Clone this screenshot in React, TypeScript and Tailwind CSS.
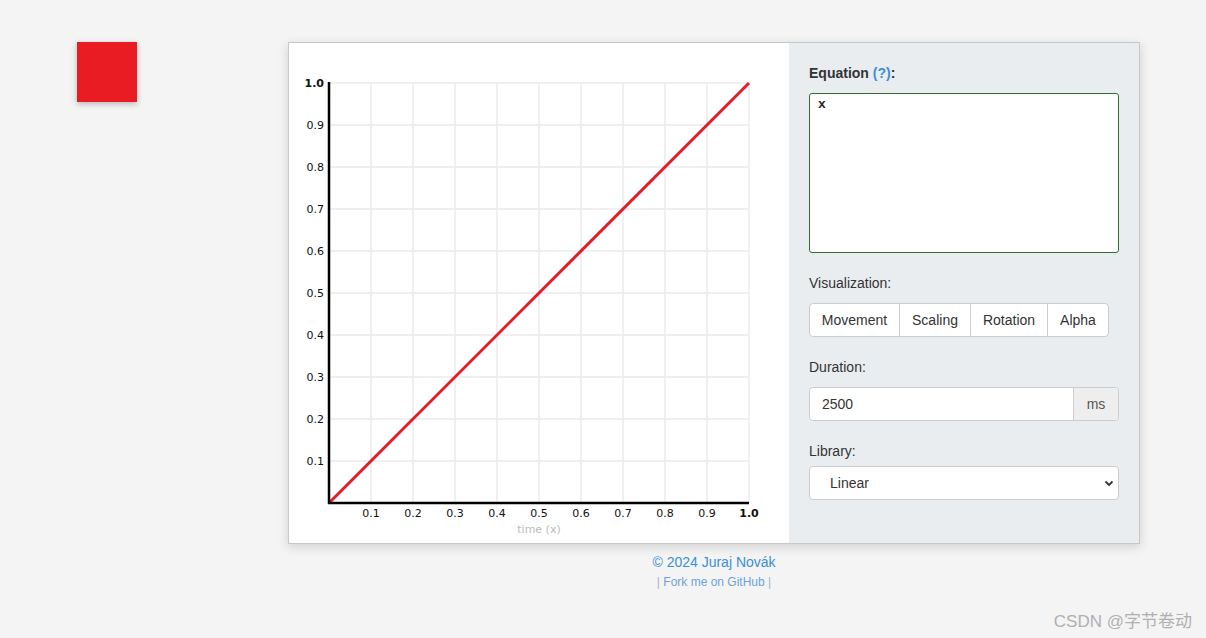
import React from "react";

function Chart() {
  const ticks = [1, 2, 3, 4, 5, 6, 7, 8, 9, 10];
  const O = 40;
  const S = 42;
  return (
    <svg width="500" height="500" viewBox="0 0 500 500" style={{ fontFamily: "'DejaVu Sans', Verdana, sans-serif" }}>
      {ticks.map((t) => (
        <g key={t}>
          <line x1={O + t * S} y1={O} x2={O + t * S} y2={O + 420} stroke="#ebebeb" strokeWidth="1.5" />
          <line x1={O} y1={O + 420 - t * S} x2={O + 420} y2={O + 420 - t * S} stroke="#ebebeb" strokeWidth="1.5" />
        </g>
      ))}
      <line x1={O} y1={O + 420} x2={O + 420} y2={O} stroke="#e51c24" strokeWidth="3" />
      <line x1={O} y1={O - 1} x2={O} y2={O + 421} stroke="#000" strokeWidth="2.5" />
      <line x1={O - 1} y1={O + 420} x2={O + 420} y2={O + 420} stroke="#000" strokeWidth="2.5" />
      {ticks.map((t) => (
        <text
          key={"y" + t}
          x={O - 5}
          y={O + 420 - t * S + 4}
          textAnchor="end"
          fontSize="11"
          fontWeight={t === 10 ? "bold" : "normal"}
          fill="#111"
        >
          {(t / 10).toFixed(1)}
        </text>
      ))}
      {ticks.map((t) => (
        <text
          key={"x" + t}
          x={O + t * S}
          y={O + 420 + 14}
          textAnchor="middle"
          fontSize="11"
          fontWeight={t === 10 ? "bold" : "normal"}
          fill="#111"
        >
          {(t / 10).toFixed(1)}
        </text>
      ))}
      <text x={O + 210} y={O + 420 + 30} textAnchor="middle" fontSize="11" fill="#bbb">
        time (x)
      </text>
    </svg>
  );
}

export default function App() {
  return (
    <div
      className="relative w-[1206px] h-[638px] bg-[#f4f4f4] overflow-hidden text-[#333]"
      style={{ fontFamily: "'Liberation Sans', Arial, sans-serif" }}
    >
      <div className="flex pt-[42px]">
        <div className="ml-[77px] w-[60px] h-[60px] bg-[#e91c24] shadow-[0_2px_6px_rgba(0,0,0,0.25)]" />
        <div className="ml-[151px] flex flex-col items-center">
          <div className="flex w-[852px] h-[502px] border border-[#c8c8c8] bg-white shadow-[0_3px_10px_rgba(0,0,0,0.15)]">
            <div className="w-[500px] h-[500px] bg-white">
              <Chart />
            </div>
            <div className="w-[350px] h-[500px] bg-[#eaedf0] px-[20px] pt-[22px]">
              <div className="text-[14px] font-bold leading-[16px]">
                Equation <span className="text-[#3a8fd6]">(?)</span>:
              </div>
              <textarea
                className="mt-[12px] block w-[310px] h-[160px] bg-white border border-[#2f6f2f] rounded-[3px] px-[8px] py-[2px] text-[13px] leading-[18px] font-bold text-[#222] resize-none outline-none"
                style={{ fontFamily: "'Liberation Mono', 'Courier New', monospace" }}
                defaultValue="x"
              />
              <div className="mt-[22px] text-[14px] leading-[16px]">Visualization:</div>
              <div className="mt-[12px] flex w-[300px] h-[34px] border border-[#cccccc] rounded-[4px] bg-white text-[14px] overflow-hidden">
                <div className="w-[90px] flex items-center justify-center border-r border-[#cccccc]">Movement</div>
                <div className="w-[71px] flex items-center justify-center border-r border-[#cccccc]">Scaling</div>
                <div className="w-[77px] flex items-center justify-center border-r border-[#cccccc]">Rotation</div>
                <div className="flex-1 flex items-center justify-center">Alpha</div>
              </div>
              <div className="mt-[22px] text-[14px] leading-[16px]">Duration:</div>
              <div className="mt-[12px] flex w-[310px] h-[34px] border border-[#cccccc] rounded-[4px] bg-white text-[14px] overflow-hidden">
                <div className="flex-1 flex items-center px-[12px]">2500</div>
                <div className="w-[45px] flex items-center justify-center bg-[#eeeeee] border-l border-[#cccccc] text-[#555]">ms</div>
              </div>
              <div className="mt-[22px] text-[14px] leading-[16px]">Library:</div>
              <div className="mt-[7px] relative flex w-[310px] h-[34px] border border-[#cccccc] rounded-[4px] bg-white text-[14px] items-center">
                <span className="pl-[20px]">Linear</span>
                <svg className="absolute right-[4px] top-[13px]" width="10" height="7" viewBox="0 0 10 7">
                  <path d="M1.5 1.5 L5 5 L8.5 1.5" fill="none" stroke="#333" strokeWidth="1.8" />
                </svg>
              </div>
            </div>
          </div>
          <div className="mt-[10px] text-[14px] leading-[16px] text-[#3a8fd6]">© 2024 Juraj Novák</div>
          <div className="mt-[5px] text-[12px] leading-[14px] text-[#6fa2d8]">
            <span className="text-[#9fb5cc]">|</span> Fork me on GitHub <span className="text-[#9fb5cc]">|</span>
          </div>
        </div>
      </div>
      <div
        className="absolute right-[14px] top-[609px] text-[17px] text-[#b0b0b0]"
        style={{ fontFamily: "'Liberation Sans', 'Noto Sans CJK SC', sans-serif" }}
      >
        CSDN @字节卷动
      </div>
    </div>
  );
}
